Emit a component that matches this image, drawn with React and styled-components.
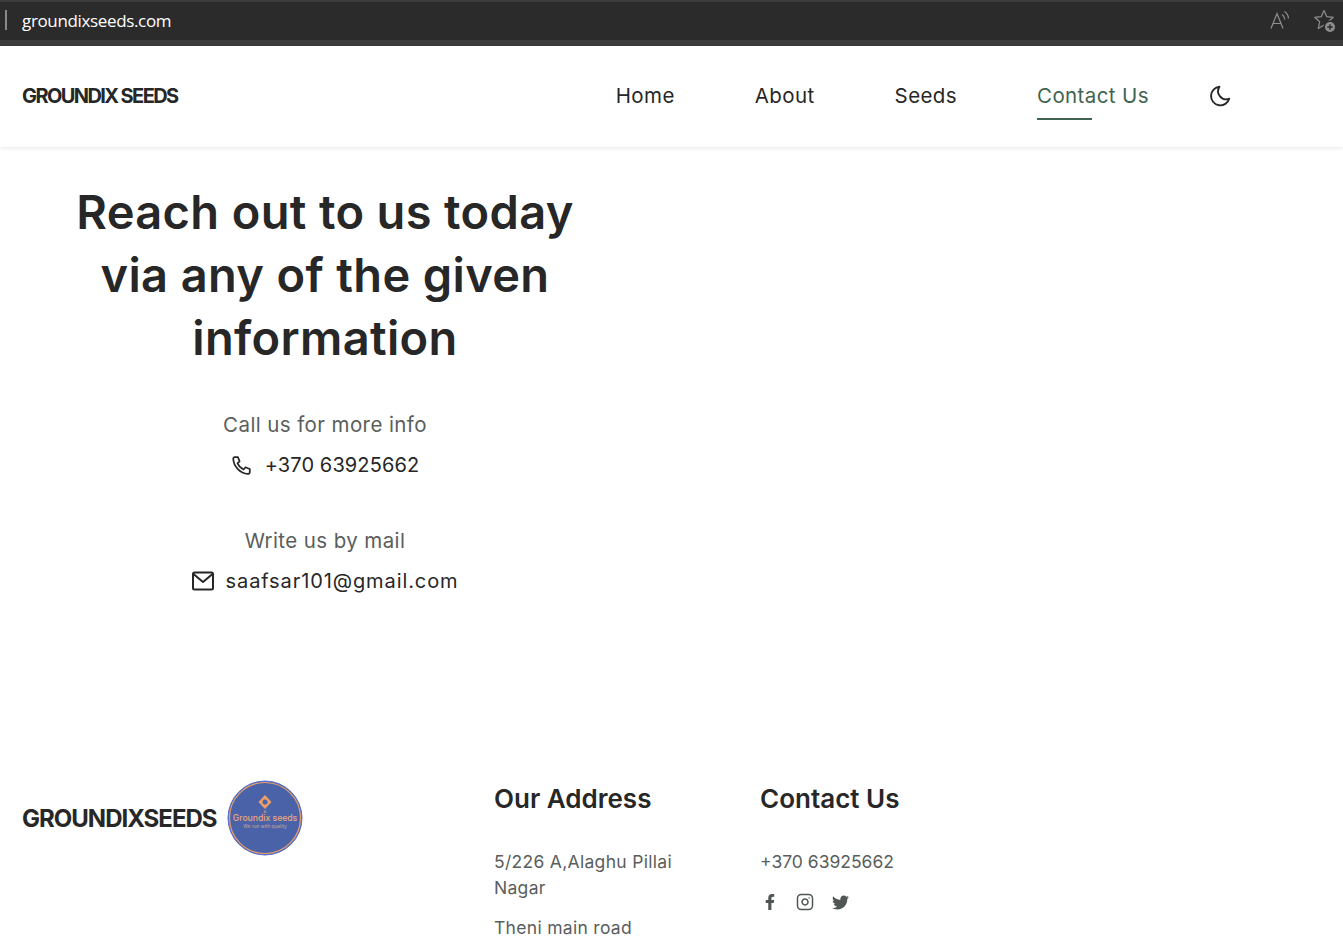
import React from 'react';
import styled, { createGlobalStyle } from 'styled-components';
import { FaFacebookF, FaTwitter } from 'react-icons/fa';
import { FiInstagram } from 'react-icons/fi';

const GlobalStyle = createGlobalStyle`
  html, body {
    margin: 0;
    height: 948px;
    overflow: hidden;
    background: #fff;
  }
  body {
    font-family: Inter, "Noto Sans", sans-serif;
    color: #272727;
  }
  * {
    box-sizing: border-box;
  }
`;

const AddressBar = styled.div`
  display: flex;
  align-items: center;
  height: 46px;
  padding: 0 6px 2px 5px;
  background: #2b2b2b;
  border-top: 2px solid #3c3c3c;
  border-bottom: 6px solid #3b3b3b;
`;

const Caret = styled.span`
  width: 2px;
  height: 20px;
  background: #8a8a8a;
  margin-right: 15px;
`;

const UrlText = styled.span`
  flex: 1;
  font-family: "Open Sans", sans-serif;
  font-size: 17px;
  letter-spacing: -0.35px;
  color: #fff;
`;

const BarIcons = styled.div`
  display: flex;
  align-items: center;
  gap: 23px;
  color: #8f8f8f;
`;

const Header = styled.header`
  display: flex;
  align-items: center;
  justify-content: space-between;
  height: 101px;
  padding: 0 112px 2px 22px;
  box-shadow: 0 1px 4px rgba(0, 0, 0, 0.1);
`;

const Logo = styled.a`
  font-size: 20px;
  font-weight: 700;
  letter-spacing: -1.6px;
  color: #272727;
`;

const Nav = styled.nav`
  display: flex;
  align-items: center;
  gap: 80px;
`;

const NavLink = styled.a`
  position: relative;
  font-size: 20.5px;
  letter-spacing: 0.4px;
  color: ${(p) => (p.$active ? '#3f6450' : '#272727')};

  &::after {
    content: "";
    display: ${(p) => (p.$active ? 'block' : 'none')};
    position: absolute;
    left: 0;
    bottom: -12px;
    width: 55px;
    height: 2px;
    background: #3f6450;
  }
`;

const ThemeToggle = styled.button`
  display: flex;
  margin-left: -20px;
  padding: 0;
  border: none;
  background: none;
  color: #272727;
`;

const Main = styled.main`
  display: flex;
  flex-direction: column;
  align-items: center;
  width: 650px;
  height: 634px;
  padding-top: 33px;
  text-align: center;
`;

const Title = styled.h1`
  margin: 0 0 40px;
  width: 520px;
  font-size: 47px;
  font-weight: 600;
  letter-spacing: 0.35px;
  line-height: 63px;
  color: #272727;
`;

const InfoBlock = styled.div`
  display: flex;
  flex-direction: column;
  align-items: center;
  margin-bottom: 44px;
`;

const InfoLabel = styled.span`
  font-size: 20.5px;
  letter-spacing: 0.4px;
  line-height: 32px;
  color: #5a5e5c;
`;

const InfoValue = styled.span`
  display: flex;
  align-items: center;
  gap: 12px;
  margin-top: 8px;
  font-size: 20px;
  letter-spacing: ${(p) => p.$tracking || 0}px;
  line-height: 32px;
  color: #272727;
`;

const Footer = styled.footer`
  display: grid;
  grid-template-columns: 472px 266px 1fr;
  padding-left: 22px;
`;

const Brand = styled.div`
  display: flex;
  align-items: center;
  gap: 10px;
  height: 74px;
`;

const BrandName = styled.span`
  font-size: 24px;
  font-weight: 700;
  letter-spacing: -1px;
  color: #272727;
`;

const Column = styled.div`
  display: flex;
  flex-direction: column;
  padding-top: 2px;
`;

const ColumnTitle = styled.h3`
  margin: 0 0 34px;
  font-size: 26px;
  font-weight: 600;
  line-height: 32px;
  color: #272727;
`;

const ColumnText = styled.p`
  margin: 0 0 14px;
  width: 190px;
  font-size: 17.5px;
  letter-spacing: ${(p) => p.$tracking || 0}px;
  line-height: 26px;
  color: #5a5e5c;
`;

const Socials = styled.div`
  display: flex;
  align-items: center;
  gap: 18px;
  margin-top: 4px;
  padding-left: 2px;
  color: #505654;
`;

const PhoneIcon = () => (
  <svg width="22" height="22" viewBox="0 0 24 24" fill="none" stroke="currentColor" strokeWidth="1.9" strokeLinejoin="round" strokeLinecap="round">
    <path d="M4 3.5h3.6l1.8 4.6-2.3 2c1.3 3 3.6 5.4 6.7 6.8l2-2.4 4.7 1.8v3.4c0 1.3-1.1 2.2-2.3 2.1C10 21.200 3 13.700 2.500 5.800 2.400 4.500 2.900 3.500 4 3.500z" />
  </svg>
);

const MailIcon = () => (
  <svg width="22" height="20" viewBox="0 0 22 20" fill="none" stroke="currentColor" strokeWidth="2" strokeLinejoin="round">
    <rect x="1" y="1.500" width="20" height="17" rx="1.500" />
    <path d="M1.500 3l9.500 8 9.500-8" />
  </svg>
);

const MoonIcon = () => (
  <svg width="22" height="22" viewBox="0 0 22 22" fill="none" stroke="currentColor" strokeWidth="1.9" strokeLinejoin="round">
    <path d="M10.500 1.800a9.300 9.300 0 1 0 9.800 11.800 8 8 0 0 1-9.800-11.800z" />
  </svg>
);

const ReadAloudIcon = () => (
  <svg width="20" height="20" viewBox="0 0 20 20" fill="none" stroke="currentColor" strokeWidth="1.200">
    <path d="M1 18.500L7 3.500l6 15M3 13.500h8" />
    <path d="M12 4.500c1.800 1.200 2.700 2.800 2.900 5M14.500 1.500c2.400 1.700 3.800 4 4 7" />
  </svg>
);

const StarAddIcon = () => (
  <svg width="24" height="24" viewBox="0 0 24 24" fill="none" stroke="currentColor" strokeWidth="1.200" strokeLinejoin="round">
    <path d="M11 2.500l2.700 6.100 6.600.7-5 4.500 1.400 6.600-5.700-3.400-5.700 3.400 1.400-6.600-5-4.500 6.600-.7z" />
    <circle cx="17" cy="19" r="6.500" fill="#2b2b2b" stroke="none" />
    <circle cx="17" cy="19" r="5" fill="#8f8f8f" stroke="none" />
    <path d="M17 16.200v5.600M14.200 19h5.600" stroke="#2b2b2b" strokeWidth="1.500" />
  </svg>
);

const LogoBadge = () => (
  <svg width="76" height="76" viewBox="0 0 76 76">
    <circle cx="38" cy="38" r="37" fill="#4a62a8" stroke="#5a6fd0" strokeWidth="1" />
    <circle cx="38" cy="38" r="35.500" fill="none" stroke="#e8a06c" strokeWidth="1.200" />
    <path d="M38 15l6.500 7-6.500 7-6.500-7z" fill="#eda065" />
    <circle cx="38" cy="22" r="2.500" fill="#4a62a8" />
    <path d="M38 30v3M36.500 33l1.500-1.500 1.500 1.500" fill="none" stroke="#d9a58a" strokeWidth="0.700" />
    <text x="38" y="41" textAnchor="middle" fontFamily="Inter, sans-serif" fontSize="8.600" fontWeight="500" fill="#eda878">Groundix seeds</text>
    <text x="38" y="48" textAnchor="middle" fontFamily="Inter, sans-serif" fontSize="4.800" fill="#c9a59a">We run with quality</text>
  </svg>
);

const App = () => {
  return (
    <>
      <GlobalStyle />
      <AddressBar>
        <Caret />
        <UrlText>groundixseeds.com</UrlText>
        <BarIcons>
          <ReadAloudIcon />
          <StarAddIcon />
        </BarIcons>
      </AddressBar>
      <Header>
        <Logo>GROUNDIX SEEDS</Logo>
        <Nav>
          <NavLink>Home</NavLink>
          <NavLink>About</NavLink>
          <NavLink>Seeds</NavLink>
          <NavLink $active>Contact Us</NavLink>
          <ThemeToggle><MoonIcon /></ThemeToggle>
        </Nav>
      </Header>
      <Main>
        <Title>Reach out to us today via any of the given information</Title>
        <InfoBlock>
          <InfoLabel>Call us for more info</InfoLabel>
          <InfoValue $tracking={0.1}><PhoneIcon />+370 63925662</InfoValue>
        </InfoBlock>
        <InfoBlock>
          <InfoLabel>Write us by mail</InfoLabel>
          <InfoValue $tracking={0.9}><MailIcon />saafsar101@gmail.com</InfoValue>
        </InfoBlock>
      </Main>
      <Footer>
        <Brand>
          <BrandName>GROUNDIXSEEDS</BrandName>
          <LogoBadge />
        </Brand>
        <Column>
          <ColumnTitle>Our Address</ColumnTitle>
          <ColumnText $tracking={0.3}>5/226 A,Alaghu Pillai Nagar</ColumnText>
          <ColumnText $tracking={0.3}>Theni main road</ColumnText>
        </Column>
        <Column>
          <ColumnTitle>Contact Us</ColumnTitle>
          <ColumnText>+370 63925662</ColumnText>
          <Socials>
            <FaFacebookF size={16} />
            <FiInstagram size={18} />
            <FaTwitter size={17} />
          </Socials>
        </Column>
      </Footer>
    </>
  );
};

export default App;
